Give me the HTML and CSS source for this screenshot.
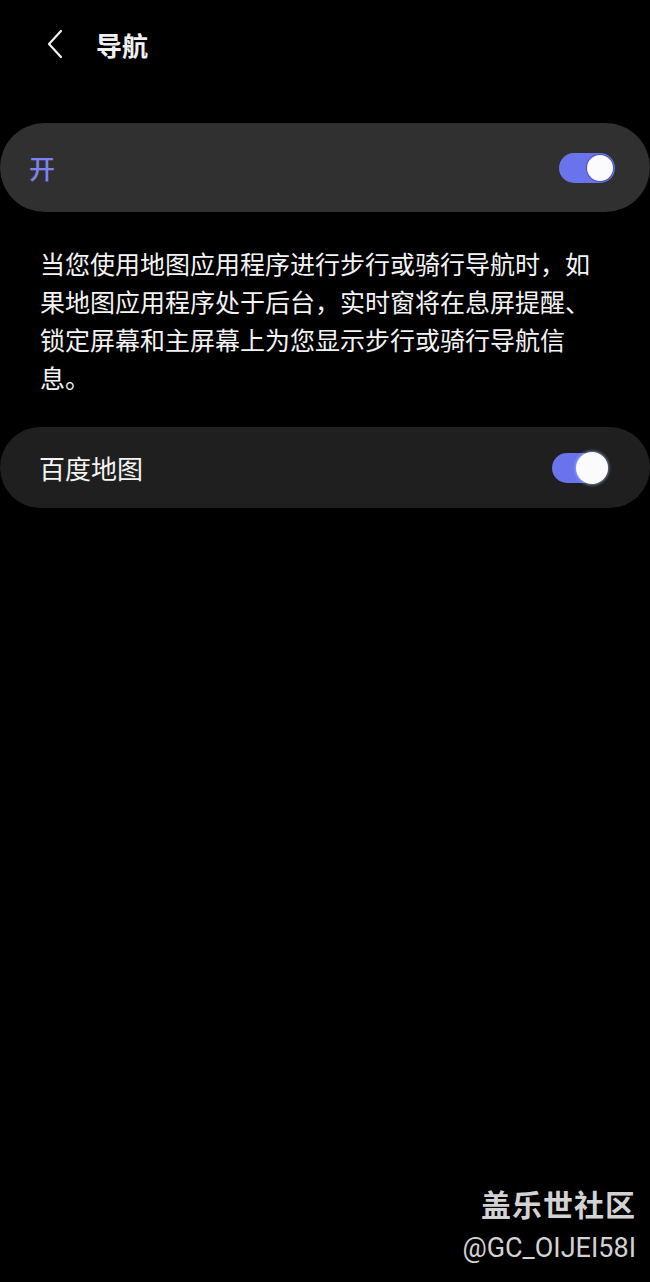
FILE: index.html
```html
<!DOCTYPE html>
<html lang="zh-CN">
<head>
    <meta charset="UTF-8">
    <meta name="viewport" content="width=device-width, initial-scale=1.0">
    <title>导航</title>
    <link rel="stylesheet" href="styles.css">
</head>
<body>
    <div class="screen">
        <header class="top-bar">
            <svg class="back" width="18" height="30" viewBox="0 0 18 30">
                <path d="M15 2 L3 15 L15 28" fill="none" stroke="#f2f2f2" stroke-width="2.2" stroke-linecap="round" stroke-linejoin="round"/>
            </svg>
            <h1 class="title">导航</h1>
        </header>

        <div class="card card-main">
            <span class="main-label">开</span>
            <div class="switch"><div class="knob"></div></div>
        </div>

        <p class="desc">当您使用地图应用程序进行步行或骑行导航时，如果地图应用程序处于后台，实时窗将在息屏提醒、锁定屏幕和主屏幕上为您显示步行或骑行导航信息。</p>

        <div class="card card-app">
            <span class="app-label">百度地图</span>
            <div class="switch switch-glow"><div class="knob"></div></div>
        </div>

        <div class="watermark">
            <div class="wm-title">盖乐世社区</div>
            <div class="wm-user">@GC_OIJEI58I</div>
        </div>
    </div>
</body>
</html>
```

FILE: styles.css
```css
body {
    margin: 0;
    background-color: #000;
    font-family: "Noto Sans CJK SC", "Noto Sans", sans-serif;
    color: #f2f2f2;
}
.screen {
    position: relative;
    width: 650px;
    height: 1282px;
    overflow: hidden;
}
.top-bar {
    height: 88px;
    display: flex;
    align-items: center;
    padding-left: 46px;
}
.back {
    display: block;
}
.title {
    margin: 0 0 0 32px;
    font-size: 26px;
    font-weight: 700;
    color: #f0f0f0;
}
.card {
    display: flex;
    align-items: center;
    justify-content: space-between;
    border-radius: 45px;
}
.card-main {
    margin-top: 35px;
    height: 89px;
    padding: 0 35px 0 29px;
    background-color: #303030;
}
.main-label {
    font-size: 26px;
    font-weight: 500;
    color: #7d83ee;
}
.desc {
    margin: 32px 40px 31px;
    font-size: 25px;
    line-height: 38px;
    color: #f4f4f4;
}
.card-app {
    height: 81px;
    padding: 0 42px 0 39px;
    background-color: #1f1f1f;
}
.app-label {
    font-size: 26px;
    color: #f4f4f4;
}
.switch {
    width: 56px;
    height: 30px;
    border-radius: 15px;
    background-color: #6a73ec;
    display: flex;
    align-items: center;
    justify-content: flex-end;
    padding: 0 2px;
    box-sizing: border-box;
}
.knob {
    width: 26px;
    height: 26px;
    border-radius: 50%;
    background-color: #fbfbfd;
    box-shadow: 0 0 0 1px #4f56b8;
}
.switch-glow {
    padding: 0;
}
.switch-glow .knob {
    width: 32px;
    height: 32px;
    box-shadow: 0 0 3px 1px rgba(170, 200, 255, 0.6);
}
.watermark {
    position: absolute;
    right: 14px;
    top: 1180px;
    text-align: right;
    color: #d2d2d2;
    text-shadow: 0 0 2px rgba(0, 0, 0, 0.6);
}
.wm-title {
    font-size: 30px;
    font-weight: 700;
    letter-spacing: 1px;
    line-height: 46px;
}
.wm-user {
    font-family: Roboto, "Open Sans", sans-serif;
    font-size: 27px;
    line-height: 40px;
    margin-top: 2px;
}
```
